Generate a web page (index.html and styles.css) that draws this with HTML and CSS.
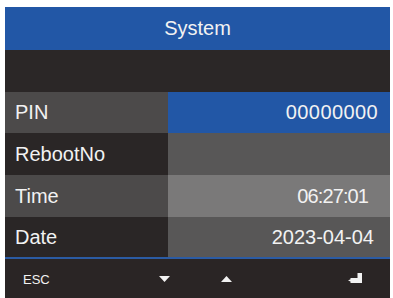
FILE: index.html
```html
<!DOCTYPE html>
<html>
<head>
<meta charset="utf-8">
<link rel="stylesheet" href="styles.css">
</head>
<body>
<div class="screen">
  <div class="header">System</div>
  <div class="band"></div>
  <div class="row">
    <div class="label l-mid">PIN</div>
    <div class="value v-blue pad-pin">00000000</div>
  </div>
  <div class="row row-tall">
    <div class="label l-dark">RebootNo</div>
    <div class="value v-mid"></div>
  </div>
  <div class="row row-tall">
    <div class="label l-mid">Time</div>
    <div class="value v-light pad-time">06:27:01</div>
  </div>
  <div class="row row-last">
    <div class="label l-dark">Date</div>
    <div class="value v-mid pad-date">2023-04-04</div>
  </div>
  <div class="rule"></div>
  <div class="footer">
    <span class="esc">ESC</span>
    <svg class="ico down" width="11" height="6" viewBox="0 0 11 6"><path d="M0 0H11L5.5 6Z" fill="#f2f2f2"/></svg>
    <svg class="ico up" width="11" height="6" viewBox="0 0 11 6"><path d="M0 6H11L5.5 0Z" fill="#f2f2f2"/></svg>
    <svg class="ico enter" width="14" height="10" viewBox="0 0 14 10"><path d="M9.5 0H14V10H2.5V8.6L0 7.4L2.5 6.2V5H9.5Z" fill="#f2f2f2"/></svg>
  </div>
</div>
</body>
</html>
```
FILE: styles.css
```css
html, body {
  margin: 0;
  padding: 0;
  background: #ffffff;
}
body {
  font-family: "Liberation Sans", Arial, sans-serif;
  color: #f2f2f2;
}
.screen {
  margin: 7px 3px 0 5px;
  width: 385px;
  height: 291px;
  display: flex;
  flex-direction: column;
  background: #2a2626;
  overflow: hidden;
}
.header {
  height: 43px;
  background: #2257a6;
  display: flex;
  align-items: center;
  justify-content: center;
  font-size: 20px;
  padding-bottom: 1px;
  box-sizing: border-box;
}
.band {
  height: 42px;
  background: #2b2727;
}
.row {
  height: 41px;
  display: flex;
  font-size: 20px;
}
.row-tall {
  height: 42px;
}
.row-last {
  height: 40px;
}
.label {
  width: 163px;
  padding-left: 10px;
  box-sizing: border-box;
  display: flex;
  align-items: center;
}
.value {
  flex: 1;
  display: flex;
  align-items: center;
  justify-content: flex-end;
  padding-right: 13px;
}
.l-mid { background: #4c4a4a; }
.l-dark { background: #2a2626; }
.v-blue { background: #2257a6; }
.v-mid { background: #585757; }
.v-light { background: #7a7979; }
.pad-pin { padding-right: 12px; letter-spacing: 0.4px; }
.pad-time { padding-right: 22px; letter-spacing: -0.9px; }
.pad-date { padding-right: 16px; }
.rule {
  height: 2px;
  background: #2b5ba3;
}
.footer {
  flex: 1;
  display: flex;
  align-items: center;
  background: #2a2525;
}
.esc {
  font-size: 13px;
  margin-left: 18px;
  margin-top: 2px;
}
.ico {
  display: block;
}
.down { margin-left: 109px; margin-top: 1px; }
.up { margin-left: 51px; }
.enter { margin-left: 116px; margin-top: -2px; }
```
